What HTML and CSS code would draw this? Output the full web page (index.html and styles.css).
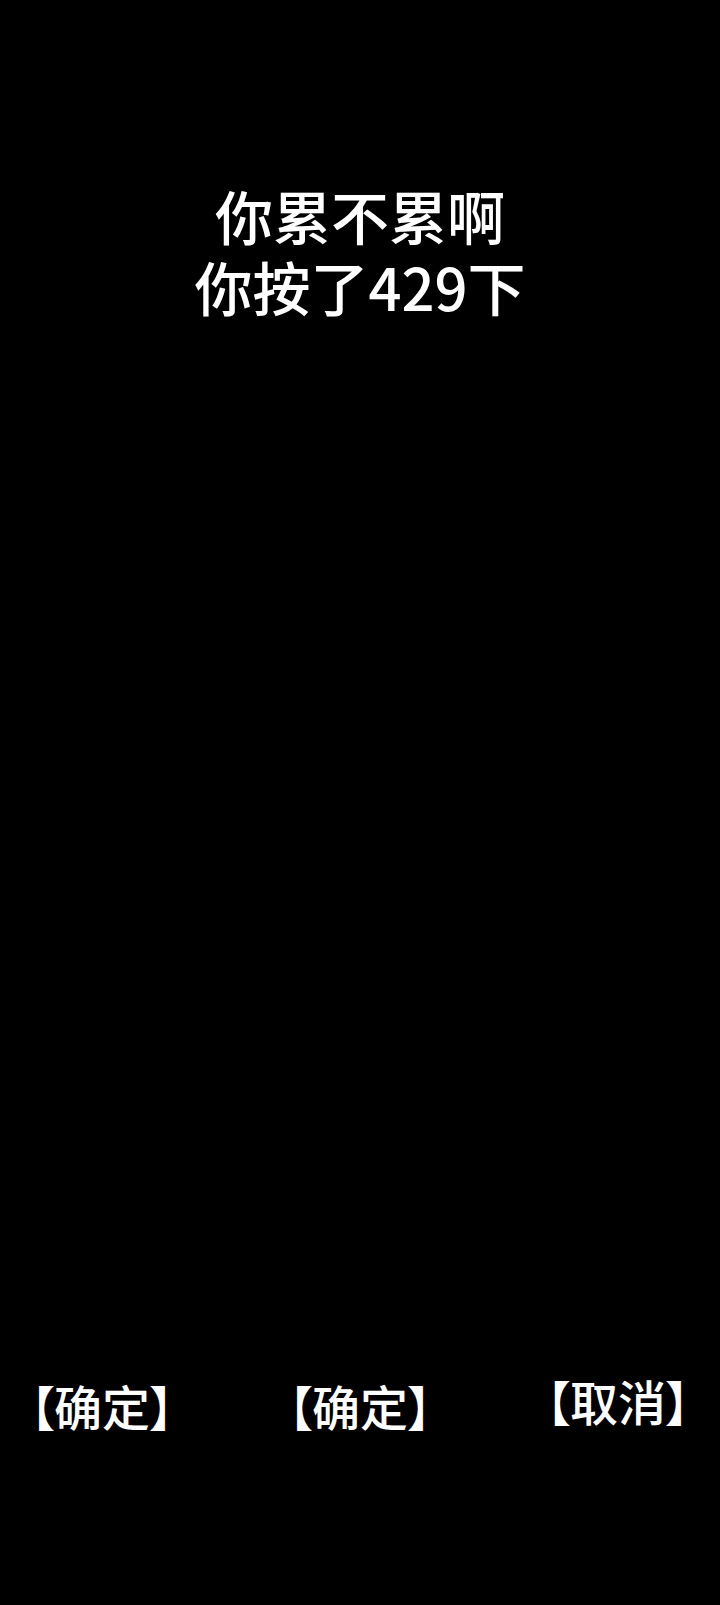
FILE: index.html
```html
<!DOCTYPE html>
<html lang="zh-CN">
<head>
  <meta charset="UTF-8">
  <meta name="viewport" content="width=device-width, initial-scale=1.0">
  <title>你累不累啊</title>
  <link rel="stylesheet" href="styles.css">
</head>
<body>
  <div class="screen">
    <div class="counter">
      <p>你累不累啊</p>
      <p>你按了<span id="count">429</span>下</p>
    </div>

    <div class="actions">
      <button class="btn">【确定】</button>
      <button class="btn">【确定】</button>
      <button class="btn btn-cancel">【取消】</button>
    </div>
  </div>
</body>
</html>
```

FILE: styles.css
```css
html, body {
  margin: 0;
  padding: 0;
  background-color: #000000;
}

.screen {
  height: 100vh;
  display: flex;
  flex-direction: column;
  font-family: "Noto Sans CJK SC", "Noto Sans", sans-serif;
  color: #ffffff;
}

.counter {
  padding-top: 180px;
  text-align: center;
  font-size: 58px;
  font-weight: 500;
  line-height: 71px;
}

.counter p {
  margin: 0;
}

.actions {
  margin-top: auto;
  margin-bottom: 170px;
  padding: 0 30px 0 30px;
  display: flex;
  justify-content: space-between;
  align-items: flex-start;
}

.btn {
  background: none;
  border: none;
  padding: 0;
  color: #ffffff;
  font-family: inherit;
  font-size: 48px;
  font-weight: 500;
  line-height: 60px;
  font-feature-settings: "palt";
  cursor: pointer;
}

.btn-cancel {
  margin-top: -5px;
}
```
